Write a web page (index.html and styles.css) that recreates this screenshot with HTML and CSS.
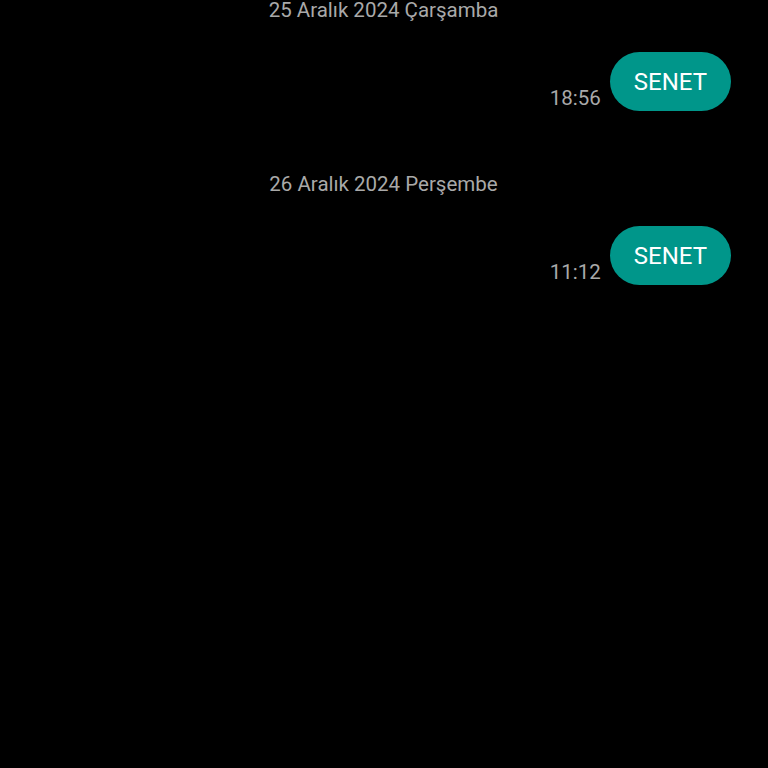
FILE: index.html
```html
<!DOCTYPE html>
<html lang="tr">
<head>
    <meta charset="UTF-8">
    <meta name="viewport" content="width=device-width, initial-scale=1.0">
    <title>Mesajlar</title>
    <link rel="stylesheet" href="styles.css">
</head>
<body>
    <div class="chat">
        <div class="day">
            <div class="date">25 Aralık 2024 Çarşamba</div>
            <div class="message">
                <span class="time">18:56</span>
                <div class="bubble">SENET</div>
            </div>
        </div>
        <div class="day">
            <div class="date">26 Aralık 2024 Perşembe</div>
            <div class="message">
                <span class="time">11:12</span>
                <div class="bubble">SENET</div>
            </div>
        </div>
    </div>
</body>
</html>
```

FILE: styles.css
```css
/* General Styles */
body {
    margin: 0;
    padding: 0;
    background: #000;
    font-family: Roboto, "Liberation Sans", sans-serif;
    height: 100vh;
    overflow: hidden;
}

.chat {
    display: flex;
    flex-direction: column;
    margin-top: -2px;
    padding-right: 37px;
}

.day {
    margin-bottom: 61px;
}

.date {
    text-align: center;
    color: #a9a9a9;
    font-size: 20.5px;
    line-height: 24px;
    margin-bottom: 30px;
    padding-left: 36px;
}

.message {
    display: flex;
    justify-content: flex-end;
    align-items: flex-end;
    gap: 9px;
}

.time {
    color: #a9a9a9;
    font-size: 20.5px;
    line-height: 24px;
    margin-bottom: 1px;
}

.bubble {
    background: #00968a;
    color: #fff;
    font-size: 24px;
    height: 57px;
    line-height: 57px;
    padding: 2px 24px 0;
    border-radius: 30px;
}
```
